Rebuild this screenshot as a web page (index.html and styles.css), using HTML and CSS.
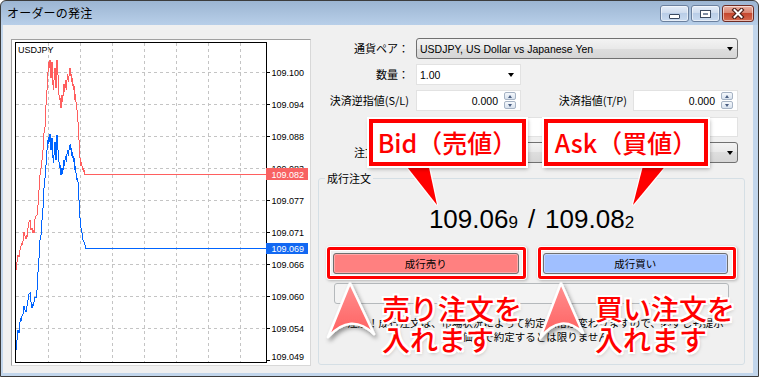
FILE: index.html
```html
<!DOCTYPE html>
<html lang="ja">
<head>
<meta charset="utf-8">
<title>オーダーの発注</title>
<link rel="stylesheet" href="styles.css">
</head>
<body>
<div class="window">
  <div class="titlebar">
    <span class="title">オーダーの発注</span>
    <div class="caps">
      <span class="cap min"><i></i></span>
      <span class="cap max"><i></i></span>
      <span class="cap close"><svg width="14" height="11" viewBox="0 0 14 11"><path d="M3.5,2 L10.5,9 M10.5,2 L3.5,9" stroke="#4b1d16" stroke-width="4.2" stroke-linecap="square" fill="none"/><path d="M3.5,2 L10.5,9 M10.5,2 L3.5,9" stroke="#fff" stroke-width="2" stroke-linecap="square" fill="none"/></svg></span>
    </div>
  </div>
  <div class="client">
    <div class="chart-panel">
      <svg width="298" height="325" viewBox="12 40 298 325">
        <g stroke="#c4c4c4" stroke-dasharray="3 3" shape-rendering="crispEdges">
          <path d="M16,72.5H266M16,104.5H266M16,136.5H266M16,168.5H266M16,200.5H266M16,232.5H266M16,264.5H266M16,296.5H266M16,328.5H266"/>
          <path d="M48.5,43V362M80.5,43V362M112.5,43V362M144.5,43V362M176.5,43V362M208.5,43V362M240.5,43V362"/>
        </g>
        <rect x="15.5" y="42.5" width="251" height="320" fill="none" stroke="#000" shape-rendering="crispEdges"/>
        <path d="M266,72.5H270M266,104.5H270M266,136.5H270M266,168.5H270M266,200.5H270M266,232.5H270M266,264.5H270M266,296.5H270M266,328.5H270M266,360.5H270" stroke="#000" shape-rendering="crispEdges"/>
        <text class="sym" x="18" y="53">USDJPY</text>
        <g class="ax">
          <text x="271.5" y="76">109.100</text>
          <text x="271.5" y="108">109.094</text>
          <text x="271.5" y="140">109.088</text>
          <text x="271.5" y="172">109.083</text>
          <text x="271.5" y="204">109.077</text>
          <text x="271.5" y="236">109.071</text>
          <text x="271.5" y="268">109.066</text>
          <text x="271.5" y="300">109.060</text>
          <text x="271.5" y="332">109.054</text>
          <text x="271.5" y="360">109.049</text>
        </g>
        <polyline fill="none" stroke="#ff5f5f" shape-rendering="crispEdges" points="16,270 16,265 17,262 17,258 18,255 19,257 19,252 20,250 21,246 21,243 22,245 23,241 23,238 24,232 25,236 26,239 26,235 27,237 28,228 28,224 29,222 30,220 30,226 31,230 32,228 32,233 33,230 34,233 34,224 35,219 36,216 37,215 37,212 38,205 38,200 39,190 39,182 40,175 41,168 41,163 42,160 43,150 43,140 44,133 45,127 45,118 46,105 46,95 47,90 47,80 48,72 48,66 49,62 49,68 50,60 50,70 51,78 51,70 52,62 52,72 53,85 53,90 54,80 54,72 55,68 55,80 56,88 56,78 57,60 57,68 58,75 58,88 59,95 59,100 60,98 60,105 61,108 61,100 62,95 62,102 63,96 63,88 64,84 64,92 65,88 65,80 66,84 66,90 67,80 67,74 68,78 68,82 69,76 69,70 70,68 70,76 71,74 71,82 72,78 72,86 73,84 73,90 74,86 74,96 75,100 75,94 76,102 76,108 77,110 77,118 78,122 78,130 79,140 79,150 80,158 80,163 81,166 81,162 82,166 82,170 83,168 84,172 84,170 85,174.5 86,174.5 266,174.5"/>
        <polyline fill="none" stroke="#0064ff" shape-rendering="crispEdges" points="16,350 16,345 17,340 17,335 18,330 19,333 19,326 20,322 21,318 21,321 22,316 23,314 23,310 24,306 25,310 26,312 26,308 27,306 28,300 28,297 29,294 30,293 30,298 31,302 32,308 32,304 33,306 34,302 34,300 35,297 36,298 37,290 37,282 38,272 38,265 39,258 39,250 40,240 41,235 41,228 42,220 43,208 43,198 44,188 45,178 45,170 46,165 46,158 47,150 47,145 48,140 48,144 49,137 49,142 50,134 50,142 51,150 51,145 52,138 52,146 53,158 53,163 54,155 54,147 55,142 55,152 56,160 56,150 57,135 57,142 58,150 58,160 59,162 59,168 60,165 60,172 61,175 61,170 62,168 62,174 63,170 63,162 64,160 64,166 65,160 65,156 66,158 66,162 67,154 67,150 68,152 68,156 69,150 69,146 70,145 70,150 71,148 71,156 72,152 72,158 73,156 73,162 74,158 74,166 75,170 75,166 76,173 76,178 77,180 77,178 78,182 78,190 79,200 79,210 80,218 80,222 81,228 81,232 82,233 82,238 83,240 84,242 84,244 85,245 86,248.5 266,248.5"/>
        <rect x="266" y="168" width="42" height="12" fill="#f86262" shape-rendering="crispEdges"/>
        <text class="ax tag" x="271.5" y="178">109.082</text>
        <rect x="266" y="243" width="42" height="11" fill="#1268f2" shape-rendering="crispEdges"/>
        <text class="ax tag" x="271.5" y="252">109.069</text>
      </svg>
    </div>
    <div class="form">
      <div class="fields">
        <label class="lbl">通貨ペア：</label>
        <div class="combo gray"><span class="val">USDJPY, US Dollar vs Japanese Yen</span><i class="arrow"></i></div>
        <label class="lbl">数量：</label>
        <div class="combo white"><span class="val">1.00</span><i class="arrow"></i></div>
        <label class="lbl">決済逆指値(S/L)</label>
        <div class="row3">
          <div class="spin"><span class="num">0.000</span><span class="spinbtns"><b class="up"></b><b class="dn"></b></span></div>
          <label class="lbl tp">決済指値(T/P)</label>
          <div class="spin"><span class="num">0.000</span><span class="spinbtns"><b class="up"></b><b class="dn"></b></span></div>
        </div>
        <span class="lbl"></span>
        <div class="textbox"></div>
        <label class="lbl">注文種別：</label>
        <div class="combo gray"><span class="val jp">成行注文</span><i class="arrow"></i></div>
      </div>
      <fieldset class="group">
        <legend>成行注文</legend>
        <div class="price"><span>109.06</span><span class="small">9</span><span class="sep">/</span><span>109.08</span><span class="small">2</span></div>
        <div class="btns">
          <button class="sell">成行売り</button>
          <button class="buy">成行買い</button>
        </div>
        <div class="disabled"></div>
        <p class="note">注意！成行注文は、市場状況によって約定価格が変わりますので、必ずしも提示<br>価格で約定するとは限りません</p>
      </fieldset>
    </div>
  </div>
</div>

<svg class="overlay" width="759" height="377" viewBox="0 0 759 377">
  <defs>
    <linearGradient id="ag" x1="0" y1="0" x2="0" y2="1">
      <stop offset="0" stop-color="#ff9090"/>
      <stop offset="1" stop-color="#ff5e5e"/>
    </linearGradient>
    <filter id="sh" x="-40%" y="-40%" width="180%" height="180%">
      <feDropShadow dx="2" dy="3" stdDeviation="2" flood-color="#000" flood-opacity="0.4"/>
    </filter>
  </defs>
  <polygon points="400,158 427,158 437,205" fill="#f00" stroke="#fff" stroke-width="2.5" paint-order="stroke"/>
  <polygon points="645,158 672,158 633,205" fill="#f00" stroke="#fff" stroke-width="2.5" paint-order="stroke"/>
  <path d="M350,283 L374,334 Q351,312 328,337 Z" fill="url(#ag)" stroke="#fff" stroke-width="2.5" stroke-linejoin="round" filter="url(#sh)"/>
  <path d="M561,283 L583,333 Q561,312 540,338 Z" fill="url(#ag)" stroke="#fff" stroke-width="2.5" stroke-linejoin="round" filter="url(#sh)"/>
</svg>
<div class="callout bid">Bid（売値）</div>
<div class="callout ask">Ask（買値）</div>
<div class="hl hl-sell"></div>
<div class="hl hl-buy"></div>
<div class="anno anno-sell">売り注文を<br>入れます</div>
<div class="anno anno-buy">買い注文を<br>入れます</div>
</body>
</html>
```

FILE: styles.css
```css
* { box-sizing: border-box; }
html, body { margin: 0; padding: 0; }
body {
  position: relative;
  width: 759px;
  height: 377px;
  overflow: hidden;
  background: #fff;
  font-family: "Noto Sans CJK JP", "Noto Sans", sans-serif;
  color: #000;
}

/* window frame */
.window {
  width: 759px;
  height: 377px;
  border: 1px solid #3c3c3c;
  border-radius: 6px 6px 0 0;
  background: linear-gradient(#9cb5d2 0, #b8cfe9 24px, #c2d6ec 24px, #c2d6ec 100%);
  padding: 0 5px 3px 2px;
  display: flex;
  flex-direction: column;
}
.titlebar {
  height: 24px;
  flex: none;
  display: flex;
  align-items: flex-start;
  justify-content: space-between;
  margin-right: -1px;
  padding-left: 4px;
}
.title {
  font-size: 12px;
  line-height: 24px;
  letter-spacing: 0.2px;
}
.caps { display: flex; gap: 2px; margin-top: 4px; }
.cap {
  height: 17px;
  border: 1px solid #6b809e;
  border-radius: 3px;
  display: flex;
  align-items: center;
  justify-content: center;
  background: linear-gradient(#e4edf8, #cfdcee 45%, #b9cde7 50%, #cadbf0);
  box-shadow: inset 0 0 0 1px rgba(255,255,255,0.55);
}
.cap.min, .cap.max { width: 29px; }
.cap.close {
  width: 32px;
  border-color: #6e2c24;
  background: linear-gradient(#eab0a3, #d98672 45%, #c5482f 50%, #d66b50);
}
.cap.min i {
  width: 11px; height: 5px;
  margin-top: 6px;
  border: 1px solid #3b4a61;
  background: #fff;
  border-radius: 1px;
}
.cap.max i {
  width: 11px; height: 8px;
  border: 1px solid #3b4a61;
  background: #7f8da3;
  box-shadow: inset 0 0 0 2px #fff;
}
.cap.close svg { display: block; }

/* client area */
.client {
  flex: 1;
  background: #f0f0f0;
  display: flex;
  padding: 14px 0 0 8px;
}
.chart-panel {
  flex: none;
  width: 300px;
  height: 327px;
  border: 1px solid #a0a0a0;
  border-right-color: #d8d8d8;
  border-bottom-color: #d8d8d8;
  background: #fff;
}
.chart-panel svg { display: block; }
.sym, .ax text, .ax {
  font-family: "Liberation Sans", Arial, sans-serif;
  font-size: 9px;
  fill: #000;
}
.ax.tag { fill: #fff; }

/* form */
.form {
  width: 427px;
  margin-left: 7px;
  margin-top: -1px;
  display: flex;
  flex-direction: column;
}
.fields {
  display: grid;
  grid-template-columns: 91px 1fr;
  grid-auto-rows: 21px;
  column-gap: 7px;
  row-gap: 5px;
  align-items: center;
  padding-right: 7px;
}
.lbl {
  font-size: 11px;
  text-align: right;
  white-space: nowrap;
  line-height: 21px;
}
.combo {
  height: 21px;
  display: flex;
  align-items: center;
  padding-left: 3px;
}
.combo.gray {
  border: 1px solid #707070;
  border-radius: 3px;
  background: linear-gradient(#f3f3f3, #e9e9e9 50%, #dedede 50%, #d6d6d6);
}
.combo.white {
  width: 105px;
  background: #fff;
  border: 1px solid #e2e2e2;
}
.val {
  font-family: "Liberation Sans", Arial, sans-serif;
  font-size: 10.5px;
  white-space: nowrap;
}
.val.jp { font-family: "Noto Sans CJK JP", sans-serif; font-size: 11px; }
.arrow {
  margin-left: auto;
  margin-right: 4px;
  width: 0; height: 0;
  border-left: 3.5px solid transparent;
  border-right: 3.5px solid transparent;
  border-top: 4px solid #000;
}
.combo.white .arrow { margin-right: 6px; }

.row3 { display: flex; align-items: center; height: 21px; }
.row3 .tp { flex: 1; padding-right: 6px; }
.spin {
  width: 105px;
  height: 21px;
  display: flex;
  align-items: center;
  background: #fff;
  border: 1px solid #e2e2e2;
  padding: 1px 4px 1px 0;
}
.num {
  flex: 1;
  text-align: right;
  padding-right: 6px;
  font-family: "Liberation Sans", Arial, sans-serif;
  font-size: 10.5px;
}
.spinbtns {
  width: 12px;
  height: 17px;
  display: flex;
  flex-direction: column;
  gap: 1px;
}
.spinbtns b {
  flex: 1;
  border: 1px solid #a6b3c4;
  border-radius: 2px;
  background: linear-gradient(#f5f8fc, #d8e2ee);
  display: flex;
  align-items: center;
  justify-content: center;
}
.spinbtns b::after {
  content: "";
  width: 0; height: 0;
  border-left: 2.5px solid transparent;
  border-right: 2.5px solid transparent;
}
.spinbtns .up::after { border-bottom: 3px solid #4a5e82; }
.spinbtns .dn::after { border-top: 3px solid #4a5e82; }
.textbox {
  height: 20px;
  background: #fff;
  border: 1px solid #e2e2e2;
}

/* group box */
.group {
  margin: 8px 0 0 0;
  padding: 0;
  height: 194px;
  border: 1px solid #d5dfe5;
  border-radius: 3px;
  min-width: 0;
}
.group legend {
  margin-left: 6px;
  padding: 0 2px;
  font-size: 11px;
  line-height: 14px;
}
.price {
  margin-top: 19px;
  height: 30px;
  text-align: center;
  font-family: "Liberation Sans", Arial, sans-serif;
  font-size: 26px;
  line-height: 30px;
  white-space: nowrap;
}
.price .small { font-size: 17px; }
.price .sep { margin: 0 10px; }
.btns {
  display: flex;
  gap: 24px;
  margin: 19px 16px 0 14px;
}
.btns button {
  flex: 1;
  height: 21px;
  padding: 0;
  border: 1px solid #707070;
  border-radius: 3px;
  font-family: "Noto Sans CJK JP", sans-serif;
  font-size: 10.5px;
  color: #000;
}
.btns .sell { background: #ff8080; box-shadow: inset 0 0 0 1px #ffa8a8; }
.btns .buy { background: #a0bfff; box-shadow: inset 0 0 0 1px #c4d7ff; }
.disabled {
  height: 21px;
  margin: 9px 15px 0 15px;
  border: 1px solid #b5b9bc;
  border-radius: 3px;
  background: #f3f3f3;
}
.note {
  margin: 12px 0 0 0;
  padding-left: 8px;
  font-size: 10.5px;
  line-height: 13.5px;
  text-align: center;
  white-space: nowrap;
}

/* annotations */
.overlay {
  position: absolute;
  left: 0;
  top: 0;
  pointer-events: none;
}
.callout {
  position: absolute;
  top: 119px;
  height: 47px;
  border: 4px solid #f00;
  background: #fff;
  box-shadow: 0 0 0 2px #fff, 1px 2px 4px 1px rgba(0,0,0,0.3);
  color: #f00;
  font-size: 25px;
  font-weight: 500;
  line-height: 1;
  display: flex;
  align-items: center;
  justify-content: center;
  white-space: nowrap;
}
.callout.bid { left: 369px; width: 157px; }
.callout.ask { left: 544px; width: 164px; }
.hl {
  position: absolute;
  top: 247px;
  height: 32px;
  border: 3px solid #f00;
  border-radius: 3px;
  box-shadow: 0 0 0 1px #fff, inset 0 0 0 1px #fff, 1px 1px 3px 1px rgba(0,0,0,0.25);
}
.hl-sell { left: 327px; width: 199px; }
.hl-buy { left: 538px; width: 198px; }
.anno {
  position: absolute;
  top: 293px;
  color: #f00;
  font-size: 28px;
  font-weight: 500;
  line-height: 31px;
  white-space: nowrap;
  text-shadow:
    2px 0 0 #fff, -2px 0 0 #fff, 0 2px 0 #fff, 0 -2px 0 #fff,
    2px 2px 0 #fff, -2px -2px 0 #fff, 2px -2px 0 #fff, -2px 2px 0 #fff,
    1px 2px 4px rgba(0,0,0,0.35);
}
.anno-sell { left: 382px; }
.anno-buy { left: 595px; }
```
